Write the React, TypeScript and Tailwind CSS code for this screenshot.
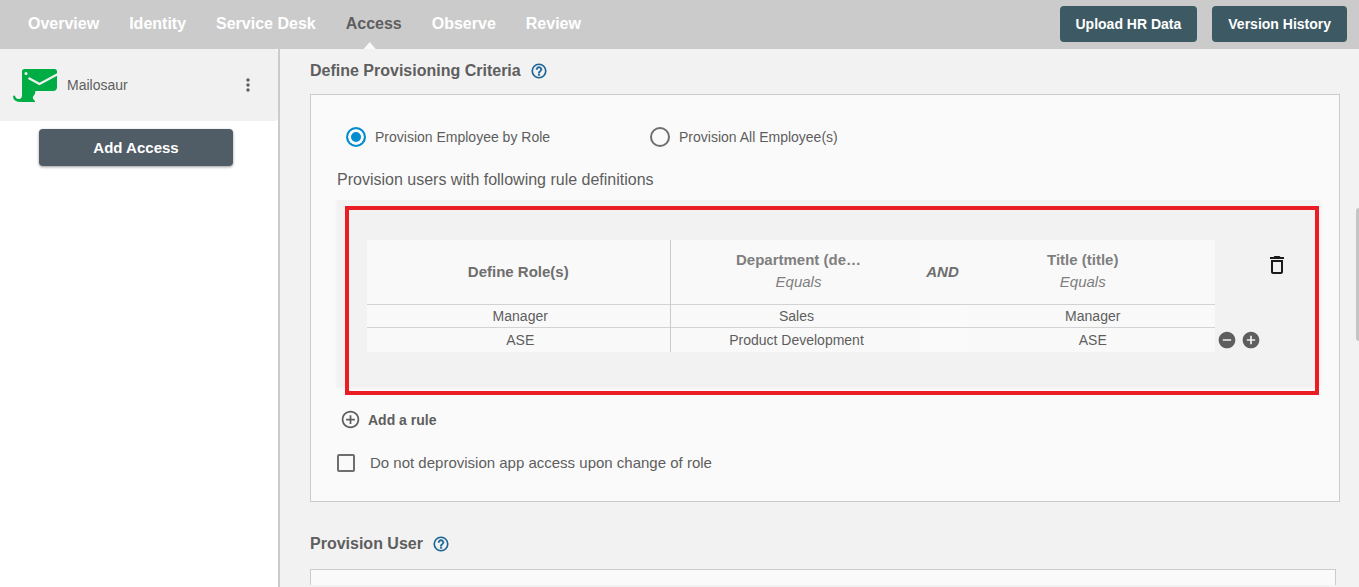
import React, { useState } from "react";
import {
  MdAddCircle,
  MdControlPoint,
  MdDeleteOutline,
  MdMoreVert,
  MdRemoveCircle,
} from "react-icons/md";

const navItems = [
  "Overview",
  "Identity",
  "Service Desk",
  "Access",
  "Observe",
  "Review",
];

const rules = [
  { role: "Manager", department: "Sales", title: "Manager" },
  { role: "ASE", department: "Product Development", title: "ASE" },
];

const MailosaurLogo = () => (
  <svg width="46" height="36" viewBox="0 0 46 36" aria-hidden="true">
    <path
      d="M12.500 2H42.500Q45 2 45 4.500V20Q45 24 41 24H23.500Q23.500 27.500 20.800 30Q20.500 32.500 23 34V35H9.500Q1 35 1 29L2.800 28.500Q4 32.500 7.500 32Q10 31.500 10 28V4.500Q10 2 12.500 2Z"
      fill="#00ad45"
    />
    <path
      d="M16.500 11L27.500 17L46 7"
      fill="none"
      stroke="#f1f1f1"
      strokeWidth="2.200"
    />
    <circle cx="14" cy="6.500" r="1.500" fill="#f1f1f1" />
  </svg>
);

const HelpIcon = () => (
  <svg width="18" height="18" viewBox="0 0 24 24" aria-hidden="true">
    <circle
      cx="12"
      cy="12"
      r="9"
      fill="none"
      stroke="currentColor"
      strokeWidth="2.200"
    />
    <path
      d="M12 6c-2.210 0-4 1.790-4 4h2c0-1.100.9-2 2-2s2 .9 2 2c0 2-3 1.750-3 5h2c0-2.250 3-2.500 3-5 0-2.210-1.790-4-4-4zM11 16h2v2h-2z"
      fill="currentColor"
      stroke="currentColor"
      strokeWidth="0.600"
    />
  </svg>
);

const Header = () => (
  <header className="flex h-[49px] shrink-0 items-center justify-between bg-[#cbcbcb] pr-3 pb-px pl-7">
    <nav className="flex h-full gap-[30px] text-base font-bold">
      {navItems.map((item) => (
        <a
          key={item}
          href="#"
          className={`relative flex items-center ${
            item === "Access" ? "text-[#5e5e5e]" : "text-white"
          }`}
        >
          {item}
          {item === "Access" && (
            <span className="absolute -bottom-px left-[18px] h-[7px] w-3 bg-[#fafafa] [clip-path:polygon(50%_0,100%_100%,0_100%)]" />
          )}
        </a>
      ))}
    </nav>
    <div className="flex gap-[15px]">
      <button className="h-9 rounded bg-[#3d5a64] px-4 text-sm font-bold text-white">
        Upload HR Data
      </button>
      <button className="h-9 rounded bg-[#3d5a64] px-4 text-sm font-bold text-white">
        Version History
      </button>
    </div>
  </header>
);

const Sidebar = () => (
  <aside className="w-[280px] shrink-0 border-r-2 border-[#cbcbcb] bg-white">
    <div className="flex h-[72px] items-center rounded-r bg-[#f1f1f1] pr-5 pl-3">
      <MailosaurLogo />
      <span className="ml-[9px] flex-1 text-sm">Mailosaur</span>
      <button aria-label="More options">
        <MdMoreVert size={20} />
      </button>
    </div>
    <div className="pt-2 pr-[45px] pl-[39px]">
      <button className="h-[37px] w-full rounded bg-[#505c66] pt-px text-[15px] font-bold text-white shadow-[0_1px_3px_rgba(0,0,0,0.4)]">
        Add Access
      </button>
    </div>
  </aside>
);

const SectionTitle = ({ children }: { children: React.ReactNode }) => (
  <div className="flex items-center gap-[9px]">
    <h2 className="text-base leading-6 font-bold">{children}</h2>
    <button aria-label="Help" className="text-[#1a6496]">
      <HelpIcon />
    </button>
  </div>
);

const RoleOption = ({
  label,
  checked,
  onChange,
}: {
  label: string;
  checked: boolean;
  onChange: () => void;
}) => (
  <label className="flex w-[304px] items-center gap-[9px] text-sm">
    <input
      type="radio"
      name="provision"
      checked={checked}
      onChange={onChange}
      className="size-5 appearance-none rounded-full border-2 border-[#6e6e6e] checked:border-[#008ccf] checked:bg-[#008ccf] checked:shadow-[inset_0_0_0_3px_#fafafa]"
    />
    {label}
  </label>
);

const RuleTable = () => (
  <table className="w-full table-fixed border-collapse bg-[#f9f9f9] text-center">
    <colgroup>
      <col className="w-[303px]" />
      <col />
      <col className="w-12" />
      <col />
    </colgroup>
    <thead className="text-[15px] leading-[22px]">
      <tr className="h-16 border-b border-[#d3d3d3] text-[#6e6e6e]">
        <th className="border-r border-[#cbcbcb] font-bold">Define Role(s)</th>
        <th className="pb-[2px] pl-2 font-normal text-[#7f7f7f]">
          <div className="font-bold">Department (de…</div>
          <em>Equals</em>
        </th>
        <th className="font-bold italic">AND</th>
        <th className="pr-4 pb-[2px] font-normal text-[#7f7f7f]">
          <div className="font-bold">Title (title)</div>
          <em>Equals</em>
        </th>
      </tr>
    </thead>
    <tbody className="text-sm leading-[22px]">
      {rules.map((rule) => (
        <tr
          key={rule.role}
          className="h-[23px] border-b border-[#d3d3d3] last:h-[25px] last:border-b-0"
        >
          <td className="border-r border-[#cbcbcb] p-0 pl-1">{rule.role}</td>
          <td className="p-0 pl-1">{rule.department}</td>
          <td className="bg-[#fafafa] p-0" />
          <td className="p-0 pl-1">{rule.title}</td>
        </tr>
      ))}
    </tbody>
  </table>
);

const RuleCard = () => (
  <div className="relative mt-2 mr-[19px] ml-[26px] flex h-[185px] bg-[#f2f2f2] pt-10 pb-[33px] pl-[30px] shadow-[0_2px_4px_rgba(0,0,0,0.06)]">
    <div className="min-w-0 flex-1">
      <RuleTable />
    </div>
    <div className="flex w-[105px] flex-col justify-between pt-[13px] pb-[2px] pl-[2px] text-[#5e5e5e]">
      <button aria-label="Delete rule" className="ml-12 w-6 text-[#1a1a1a]">
        <MdDeleteOutline size={24} />
      </button>
      <div className="flex gap-1">
        <button aria-label="Remove row">
          <MdRemoveCircle size={20} />
        </button>
        <button aria-label="Add row">
          <MdAddCircle size={20} />
        </button>
      </div>
    </div>
    <div className="pointer-events-none absolute top-[6px] right-px -bottom-[10px] left-2 border-4 border-[#ec1c24]" />
  </div>
);

const App = () => {
  const [provisionBy, setProvisionBy] = useState("role");
  const [keepAccess, setKeepAccess] = useState(false);

  return (
    <div className="flex h-screen flex-col overflow-hidden bg-[#f2f2f2] font-['Liberation_Sans',Arial,sans-serif] text-[#5e5e5e]">
      <Header />
      <div className="flex min-h-0 flex-1">
        <Sidebar />
        <main className="relative mb-[2px] min-w-0 flex-1 overflow-hidden pt-[10px] pr-[19px] pl-[30px]">
          <SectionTitle>Define Provisioning Criteria</SectionTitle>
          <section className="mt-[11px] border border-[#cbcbcb] bg-[#fafafa] pt-8 pb-7">
            <div className="flex pl-[35px]">
              <RoleOption
                label="Provision Employee by Role"
                checked={provisionBy === "role"}
                onChange={() => setProvisionBy("role")}
              />
              <RoleOption
                label="Provision All Employee(s)"
                checked={provisionBy === "all"}
                onChange={() => setProvisionBy("all")}
              />
            </div>
            <p className="mt-[21px] pl-[26px] text-base leading-6">
              Provision users with following rule definitions
            </p>
            <RuleCard />
            <button className="mt-6 ml-[29px] flex items-center gap-[7px] text-sm font-bold">
              <MdControlPoint size={21} />
              Add a rule
            </button>
            <label className="mt-[23px] ml-[26px] flex items-center gap-[15px] text-[15px] leading-5">
              <input
                type="checkbox"
                checked={keepAccess}
                onChange={() => setKeepAccess(!keepAccess)}
                className="size-[18px] appearance-none rounded-xs border-2 border-[#6e6e6e] checked:bg-[#008ccf]"
              />
              Do not deprovision app access upon change of role
            </label>
          </section>
          <div className="mt-[30px]">
            <SectionTitle>Provision User</SectionTitle>
          </div>
          <section className="mt-[13px] mr-1 h-40 border border-[#cbcbcb] bg-[#fafafa]" />
          <div className="absolute top-[159px] right-0 h-[133px] w-[3px] rounded-l bg-[#c4c4c4]" />
        </main>
      </div>
    </div>
  );
};

export default App;
